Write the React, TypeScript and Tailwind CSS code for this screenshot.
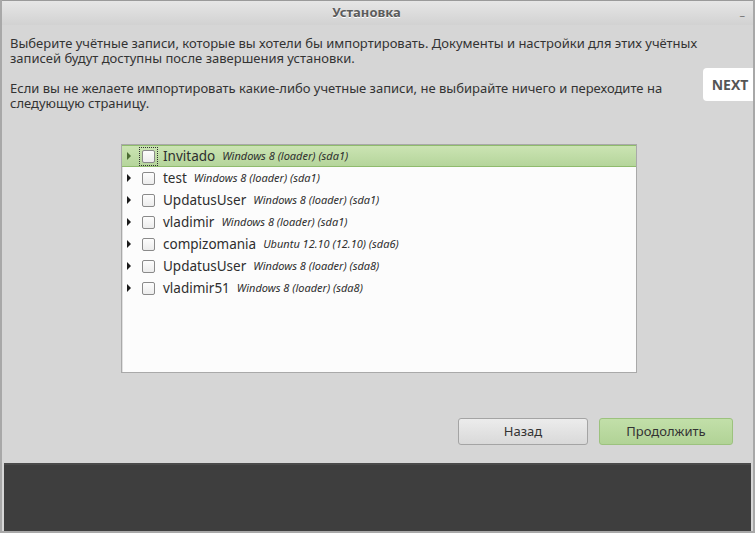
import React from 'react';

interface Account {
  name: string;
  info: string;
}

const accounts: Account[] = [
  { name: 'Invitado', info: 'Windows 8 (loader) (sda1)' },
  { name: 'test', info: 'Windows 8 (loader) (sda1)' },
  { name: 'UpdatusUser', info: 'Windows 8 (loader) (sda1)' },
  { name: 'vladimir', info: 'Windows 8 (loader) (sda1)' },
  { name: 'compizomania', info: 'Ubuntu 12.10 (12.10) (sda6)' },
  { name: 'UpdatusUser', info: 'Windows 8 (loader) (sda8)' },
  { name: 'vladimir51', info: 'Windows 8 (loader) (sda8)' },
];

const AccountRow: React.FC<{ account: Account; selected: boolean }> = ({ account, selected }) => (
  <div
    className={
      selected
        ? 'flex items-center h-[22px] bg-gradient-to-b from-[#cbe4b3] to-[#b5d59b] border-y border-[#8fbb6d]'
        : 'flex items-center h-[22px] border-y border-transparent'
    }
  >
    <svg className="ml-[3px] w-[8px] h-[8px]" viewBox="0 0 8 8" aria-hidden="true">
      <path d="M2 0 L6 4 L2 8 Z" fill={selected ? '#4b6b33' : '#1a1a1a'} />
    </svg>
    <div
      className={
        selected
          ? 'ml-[6px] w-[19px] h-[19px] flex items-center justify-center border border-dotted border-[#333]'
          : 'ml-[6px] w-[19px] h-[19px] flex items-center justify-center'
      }
    >
      <div className="w-[13px] h-[13px] rounded-[2px] border border-[#8a8a8a] bg-gradient-to-b from-[#fdfdfd] to-[#ececec]" />
    </div>
    <span className="ml-[5px] text-[13.5px] text-[#2e2e2e]">{account.name}</span>
    <span className="ml-[7px] text-[11px] italic text-[#2e2e2e]">{account.info}</span>
  </div>
);

export default function App() {
  return (
    <div
      className="w-[755px] h-[533px] bg-[#d6d6d6] flex flex-col border-l-2 border-r-2 border-b-2 border-[#a8a8a8] overflow-hidden"
      style={{ fontFamily: '"Noto Sans", "DejaVu Sans", sans-serif' }}
    >
      {/* title bar */}
      <div className="relative h-[25px] flex items-center justify-center pr-[22px] bg-gradient-to-b from-[#e6e6e6] to-[#d2d2d2] border-t border-[#9a9a9a]">
        <span className="text-[13px] font-bold text-[#5c5c5c] [text-shadow:0_1px_0_#fff]">Установка</span>
        <span className="absolute right-[8px] top-[6px] text-[11px] text-[#777]">–</span>
      </div>

      {/* description */}
      <div className="relative pl-[8px] pt-[11px] text-[13px] leading-[15px] text-[#333]">
        <p className="whitespace-nowrap">
          Выберите учётные записи, которые вы хотели бы импортировать. Документы и настройки для этих учётных
          <br />
          записей будут доступны после завершения установки.
        </p>
        <p className="mt-[15px] whitespace-nowrap">
          Если вы не желаете импортировать какие-либо учетные записи, не выбирайте ничего и переходите на
          <br />
          следующую страницу.
        </p>
        <div
          className="absolute right-[-4px] top-[43px] w-[54px] h-[33px] bg-white rounded-l-[4px] flex items-center justify-center text-[14px] font-bold text-[#555]"
          style={{ fontFamily: '"Open Sans", "Liberation Sans", sans-serif' }}
        >
          NEXT
        </div>
      </div>

      {/* accounts list */}
      <div className="ml-[119px] mt-[33px] w-[516px] h-[229px] bg-[#fcfcfc] border border-[#a9a9a9] shadow-[inset_1px_1px_0_#e0e0e0]">
        {accounts.map((a, i) => (
          <AccountRow key={i} account={a} selected={i === 0} />
        ))}
      </div>

      {/* buttons */}
      <div className="flex justify-end gap-[11px] mt-[45px] pr-[20px]">
        <button className="w-[130px] h-[27px] rounded-[3px] border border-[#a4a4a4] bg-gradient-to-b from-[#ececec] to-[#d9d9d9] text-[13px] text-[#333]">
          Назад
        </button>
        <button className="w-[134px] h-[27px] rounded-[3px] border border-[#9cc27e] bg-gradient-to-b from-[#c2dfa9] to-[#b1d396] text-[13px] text-[#333]">
          Продолжить
        </button>
      </div>

      {/* bottom panel */}
      <div className="mt-[18px] mx-[2px] flex-1 bg-[#3e3e3e] border-t-2 border-[#4a4a4a]" />
    </div>
  );
}
